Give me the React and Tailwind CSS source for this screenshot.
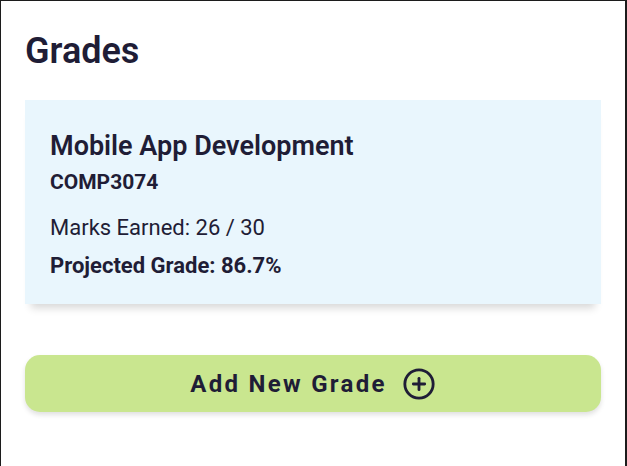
import React from "react";
import { CirclePlus } from "lucide-react";

const App = () => {
  return (
    <div className="w-[627px] h-[466px] overflow-hidden bg-white border-t border-l border-r-2 border-[#1c1c1c] px-6 pt-[29px] font-['Roboto',sans-serif] text-[#1f1d36]">
      <h1 className="text-[36px] leading-[43px] font-semibold">Grades</h1>

      <div className="mt-[27px] bg-[#e9f6fd] pl-[25px] pt-[30px] pb-[26px] shadow-[0_10px_8px_-6px_rgba(0,0,0,0.16)]">
        <h2 className="text-[27px] leading-[32px] font-semibold">Mobile App Development</h2>
        <p className="mt-2 text-[21px] leading-[25px] font-bold">COMP3074</p>
        <p className="mt-5 text-[22px] leading-[25px]">Marks Earned: 26 / 30</p>
        <p className="mt-[13px] text-[22px] leading-[25px] font-bold">Projected Grade: 86.7%</p>
      </div>

      <button className="mt-[51px] w-full h-[57px] rounded-[15px] bg-[#c9e68f] flex items-center justify-center gap-[15px] shadow-[0_3px_5px_rgba(0,0,0,0.12)]">
        <span className="text-[24px] leading-none font-bold tracking-[2.3px]">Add New Grade</span>
        <CirclePlus size={34} strokeWidth={2} />
      </button>
    </div>
  );
};

export default App;
